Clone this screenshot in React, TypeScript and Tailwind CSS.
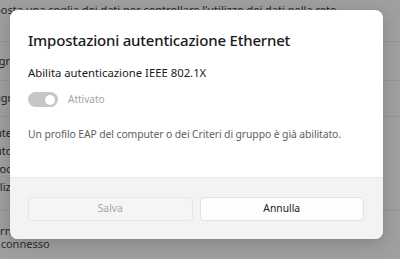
import React from "react";

const FONT = { fontFamily: '"Noto Sans", "Open Sans", sans-serif' };

// Dimmed settings page behind the modal; only the left edge peeks out.
function BackgroundPage() {
  return (
    <div className="flex h-[259px] w-[400px] flex-col overflow-hidden bg-[#9f9f9f] text-[11px] text-[#1f1f1f]">
      <div className="h-[42px] border-b border-[#959595] pt-[2px]">
        <p className="-ml-[20px] whitespace-nowrap text-[#1d2a38]">
          Imposta una soglia dei dati per controllare l'utilizzo dei dati nella rete
        </p>
      </div>
      <div className="flex h-[39px] items-center border-b border-[#959595]">
        <p className="-ml-[22px] whitespace-nowrap">Integrità della rete</p>
      </div>
      <div className="flex h-[36px] items-center border-b border-[#959595]">
        <p className="-ml-[12px] whitespace-nowrap">Migrazione del profilo</p>
      </div>
      <div className="flex h-[94px] flex-col border-b border-[#959595] pt-[7px] leading-[18px]">
        <p className="-ml-[12px] whitespace-nowrap">Autenticazione</p>
        <p className="-ml-[12px] whitespace-nowrap">Autorizzazione</p>
        <p className="-ml-[22px] whitespace-nowrap">Protocollo</p>
        <p className="-ml-[15px] whitespace-nowrap">Utilizzo dati</p>
      </div>
      <div className="flex flex-col pt-[13px] leading-[13px]">
        <p className="-ml-[23px] whitespace-nowrap">Ethernet</p>
        <p className="-ml-[24px] whitespace-nowrap text-[#2e2e2e]">Non connesso</p>
      </div>
    </div>
  );
}

function Toggle() {
  return (
    <div className="flex h-[15px] w-[30px] items-center justify-end rounded-full bg-[#c6c6c6] pr-[3px]">
      <div className="h-[10px] w-[10px] rounded-full bg-white" />
    </div>
  );
}

function Dialog() {
  return (
    <div
      className="absolute left-[10px] top-[10px] flex h-[229px] w-[373px] flex-col overflow-hidden rounded-[8px] bg-white shadow-[0_4px_16px_rgba(0,0,0,0.18)]"
      style={FONT}
    >
      <div className="flex flex-1 flex-col px-[18px] pt-[19px]">
        <h2 className="text-[15px] font-medium leading-[22px] tracking-[-0.2px] text-[#1b1b1b]">
          Impostazioni autenticazione Ethernet
        </h2>
        <p className="mt-[14px] text-[11.3px] leading-[16px] text-[#1b1b1b]">
          Abilita autenticazione IEEE 802.1X
        </p>
        <div className="mt-[11px] flex items-center gap-[10px]">
          <Toggle />
          <span className="text-[10px] text-[#a3a3a3]">Attivato</span>
        </div>
        <p className="mt-[19px] whitespace-nowrap text-[10.4px] leading-[16px] tracking-[-0.1px] text-[#5e5e5e]">
          Un profilo EAP del computer o dei Criteri di gruppo è già abilitato.
        </p>
      </div>
      <div className="flex h-[62px] items-start gap-[7px] border-t border-[#e8e8e8] bg-[#f3f3f3] pl-[18px] pr-[19px] pt-[19px]">
        <button
          disabled
          className="flex h-[24px] flex-1 items-center justify-center rounded-[4px] border border-[#e6e6e6] bg-[#f5f5f5] text-[10.3px] text-[#a6a6a6]"
        >
          Salva
        </button>
        <button className="flex h-[24px] flex-1 items-center justify-center rounded-[4px] border border-[#e2e2e2] bg-[#fdfdfd] text-[10.3px] text-[#1b1b1b]">
          Annulla
        </button>
      </div>
    </div>
  );
}

export default function App() {
  return (
    <div className="relative h-[259px] w-[400px] overflow-hidden" style={FONT}>
      <BackgroundPage />
      <Dialog />
    </div>
  );
}
